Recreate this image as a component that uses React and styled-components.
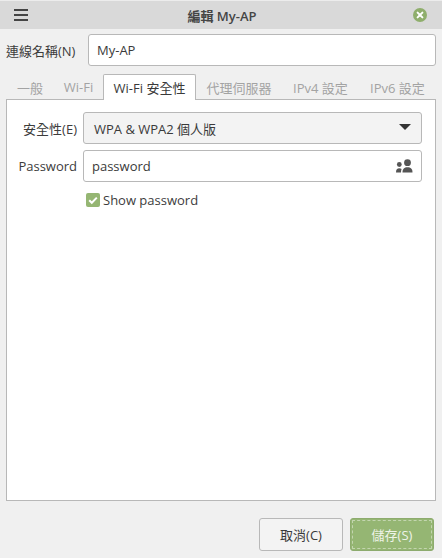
import React from 'react';
import styled, { createGlobalStyle } from 'styled-components';

const Global = createGlobalStyle`
  html, body { margin: 0; padding: 0; background: #efefef; }
  * { box-sizing: border-box; }
`;
const Win = styled.div`
  width: 442px; height: 558px; display: flex; flex-direction: column; overflow: hidden;
  background: #f0f0f0; color: #333;
  font-family: "Open Sans", "Noto Sans CJK TC", sans-serif; font-size: 13px;
  border-top: 1px solid #ececec;
`;
const TitleBar = styled.header`
  height: 28px; flex: none; background: #d9d9d9; display: flex; align-items: center;
  padding: 0 14px; position: relative;
`;
const Title = styled.div`
  flex: 1; text-align: center; font-size: 13px; color: #454545; font-weight: 600; padding-left: 1px;
`;
const MenuIcon = styled.svg` width: 16px; height: 14px; display: block; `;
const CloseIcon = styled.svg` width: 14px; height: 14px; display: block; margin-right: 1px; `;
const NameRow = styled.div`
  display: flex; align-items: center; gap: 6px; padding: 5px 6px 0 6px; height: 37px; flex: none;
`;
const NameLabel = styled.label` width: 76px; white-space: nowrap; color: #3c3c3c; font-size: 13px; `;
const Entry = styled.div`
  flex: 1; height: ${p => p.$h || 32}px; background: #fff; border: 1px solid #b8b8b8; border-radius: 3px;
  display: flex; align-items: center; justify-content: space-between;
  padding: 0 8px; color: #3a3a3a; font-size: 13px;
`;
const Tabs = styled.div`
  display: flex; align-items: flex-end; height: 25px; margin-top: 8px; padding-left: 6px; flex: none;
  position: relative; z-index: 1;
`;
const Tab = styled.div`
  height: ${p => p.$active ? 25 : 24}px; width: ${p => p.$w}px; flex: none; display: flex; align-items: center; justify-content: center;
  white-space: nowrap; font-size: 13px;
  color: ${p => p.$active ? '#3a3a3a' : '#a3a3a3'};
  ${p => p.$active ? `
    background: #fff; border: 1px solid #b8b8b8; border-bottom: none; border-radius: 2px 2px 0 0;
    margin-bottom: -1px; height: 26px;
  ` : ''}
`;
const Panel = styled.main`
  height: 402px; flex: none; margin: 0 6px; background: #fff; border: 1px solid #b8b8b8;
  padding: 12px 13px 0 0; display: flex; flex-direction: column;
`;
const FormGrid = styled.div`
  display: grid; grid-template-columns: 70px 1fr; column-gap: 6px; row-gap: 6px; align-items: center;
`;
const FieldLabel = styled.label` text-align: right; color: #3c3c3c; font-size: 13px; white-space: nowrap; `;
const Combo = styled.div`
  height: 32px; background: #f3f3f3; border: 1px solid #b8b8b8; border-radius: 3px;
  display: flex; align-items: center; justify-content: space-between; padding: 0 10px 0 10px;
  color: #3a3a3a; font-size: 13px;
`;
const Arrow = styled.span`
  width: 0; height: 0; border-left: 6px solid transparent; border-right: 6px solid transparent;
  border-top: 6px solid #333; margin-top: -3px;
`;
const CheckRow = styled.div`
  grid-column: 2; display: flex; align-items: center; gap: 3px; padding-left: 3px; margin-top: 3px;
  color: #3c3c3c; font-size: 13px;
`;
const Check = styled.svg` width: 14px; height: 14px; display: block; `;
const Footer = styled.footer`
  flex: 1; display: flex; justify-content: flex-end; align-items: flex-start; gap: 7px; padding: 17px 8px 0 0;
`;
const Button = styled.button`
  width: 84px; height: 33px; border-radius: 3px; font: inherit; font-size: 13px;
  background: ${p => p.$primary ? '#95b673' : '#f3f3f3'};
  color: ${p => p.$primary ? '#eef3e8' : '#3a3a3a'};
  border: 1px solid ${p => p.$primary ? '#8dab6e' : '#b8b8b8'};
  padding: 0;
  ${p => p.$primary ? 'outline: 1px dashed #c3d5af; outline-offset: -3px;' : ''}
`;

export default function App() {
  return (
    <Win>
      <Global />
      <TitleBar>
        <MenuIcon viewBox="0 0 16 14">
          <rect x="0" y="1" width="14" height="2" fill="#444" />
          <rect x="0" y="6" width="14" height="2" fill="#444" />
          <rect x="0" y="11" width="14" height="2" fill="#444" />
        </MenuIcon>
        <Title>編輯 My-AP</Title>
        <CloseIcon viewBox="0 0 14 14">
          <circle cx="7" cy="7" r="7" fill="#8fae6c" />
          <path d="M4.6 4.6l4.8 4.8M9.4 4.6l-4.8 4.8" stroke="#fff" strokeWidth="2" strokeLinecap="round" />
        </CloseIcon>
      </TitleBar>
      <NameRow>
        <NameLabel>連線名稱(N)</NameLabel>
        <Entry>My-AP</Entry>
      </NameRow>
      <Tabs>
        <Tab $w={48}>一般</Tab>
        <Tab $w={49}>Wi-Fi</Tab>
        <Tab $w={93} $active>Wi-Fi 安全性</Tab>
        <Tab $w={86}>代理伺服器</Tab>
        <Tab $w={77}>IPv4 設定</Tab>
        <Tab $w={77}>IPv6 設定</Tab>
      </Tabs>
      <Panel>
        <FormGrid>
          <FieldLabel>安全性(E)</FieldLabel>
          <Combo>WPA &amp; WPA2 個人版<Arrow /></Combo>
          <FieldLabel>Password</FieldLabel>
          <Entry>
            password
            <svg width="17" height="14" viewBox="0 0 17 14">
              <circle cx="11.5" cy="3.7" r="3.4" fill="#555" />
              <path d="M6.5 13.5c0-3.6 1.8-5.2 5-5.2s5 1.6 5 5.2z" fill="#555" />
              <circle cx="3.3" cy="5.5" r="2.4" fill="#555" />
              <path d="M0 13.5c0-2.8 1.2-4.2 3.3-4.2 1 0 1.7.3 2.3.8-.4.9-.6 2-.6 3.4z" fill="#555" />
            </svg>
          </Entry>
          <CheckRow>
            <Check viewBox="0 0 14 14">
              <rect width="14" height="14" rx="2" fill="#95b673" />
              <path d="M3.2 7.2l2.6 2.6 5-5.2" fill="none" stroke="#fff" strokeWidth="2" />
            </Check>
            Show password
          </CheckRow>
        </FormGrid>
      </Panel>
      <Footer>
        <Button>取消(C)</Button>
        <Button $primary>儲存(S)</Button>
      </Footer>
    </Win>
  );
}
